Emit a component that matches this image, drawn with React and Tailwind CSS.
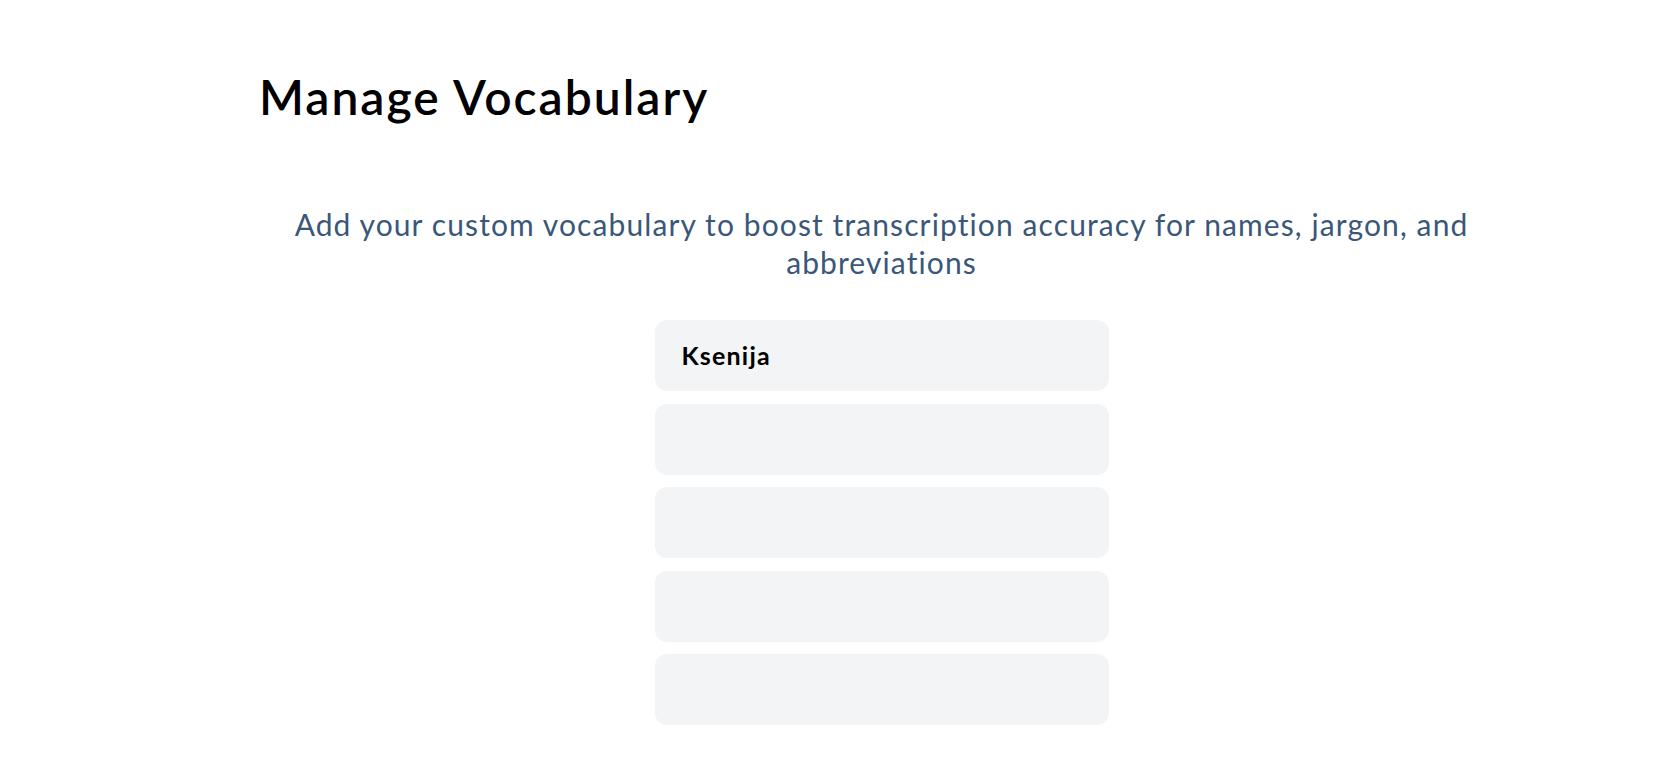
export default function App() {
  const words = ["Ksenija", "", "", "", ""];
  return (
    <div
      className="min-h-screen bg-white pl-[259px] pr-[152px] pt-[68px] text-black"
      style={{ fontFamily: "Lato, 'Noto Sans', sans-serif" }}
    >
      <h1 className="text-[48px] leading-[58px] font-semibold tracking-[2px]">Manage Vocabulary</h1>
      <p className="mt-[79px] text-center text-[30px] leading-[38px] tracking-[1.1px] text-[#3a5779]">
        Add your custom vocabulary to boost transcription accuracy for names, jargon, and abbreviations
      </p>
      <div className="mx-auto mt-[39px] flex w-[454px] flex-col gap-[12.5px]">
        {words.map((w, i) => (
          <div
            key={i}
            className="flex h-[71px] items-center rounded-xl bg-[#f3f4f6] px-[27px] text-[25px] font-bold tracking-[1.2px]"
          >
            {w}
          </div>
        ))}
      </div>
    </div>
  );
}
